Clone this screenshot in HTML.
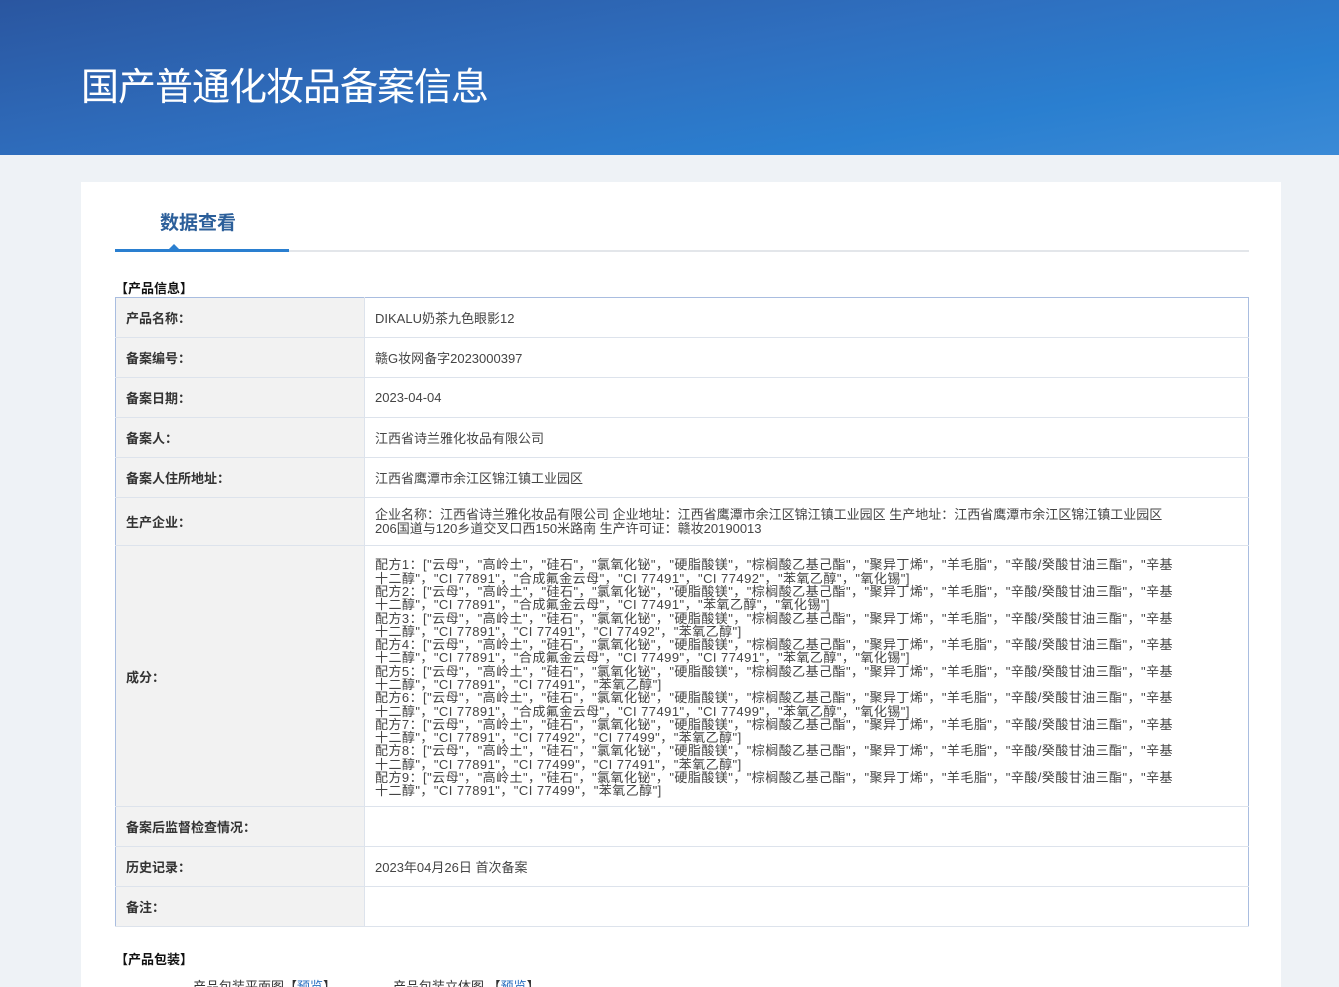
<!DOCTYPE html>
<html><head><meta charset="utf-8"><style>
*{margin:0;padding:0;box-sizing:border-box}
html,body{width:1339px;height:987px;overflow:hidden}
body{background:#eef2f6;font-family:"Liberation Sans","Noto Sans CJK SC",sans-serif;color:#333;position:relative}
.hd{height:155px;background:linear-gradient(170deg,#2a56a0 0%,#2f6fbf 45%,#2a7fd0 75%,#3a8ad6 100%);position:relative;overflow:hidden}
.hd h1{position:absolute;left:81px;top:56px;font-size:38px;font-weight:normal;color:#fff;letter-spacing:-1px}
.card{position:absolute;left:81px;top:182px;width:1200px;height:805px;background:#fff}
.tab{position:absolute;left:34px;top:28px;width:1134px;height:42px;border-bottom:2px solid #e3e6ea}
.tab span{position:absolute;left:45px;top:-2px;font-size:19px;font-weight:bold;color:#2c5f9a}
.tab i{position:absolute;left:0;bottom:-2px;width:174px;height:3px;background:#2a7fd0}
.tab b{position:absolute;left:54px;bottom:1px;border:5px solid transparent;border-bottom-color:#2a7fd0;border-top:0}
.sec{position:absolute;left:34px;font-size:13px;font-weight:bold;color:#111}
table{position:absolute;left:34px;top:115px;width:1134px;border-collapse:collapse;border:1px solid #a9bde0;font-size:13px}
td{border-bottom:1px solid #dde3ec;height:40px;vertical-align:middle;padding-left:10px}
td.l{width:249px;background:#f2f2f2;font-weight:bold;color:#333;border-right:1px solid #dde3ec}
td.v{color:#444}
.ing{font-size:13px;letter-spacing:0.45px;line-height:13.3px;white-space:nowrap;color:#444;padding-top:4px}
.pk{position:absolute;top:976px;font-size:13px;color:#333}
.pk a{color:#2a6fc0}
</style></head><body>
<div class="hd"><h1>国产普通化妆品备案信息</h1></div>
<div class="card">
<div class="tab"><span>数据查看</span><i></i><b></b></div>
<div class="sec" style="top:96px">【产品信息】</div>
<table>
<tr><td class="l">产品名称：</td><td class="v">DIKALU奶茶九色眼影12</td></tr>
<tr><td class="l">备案编号：</td><td class="v">赣G妆网备字2023000397</td></tr>
<tr><td class="l">备案日期：</td><td class="v">2023-04-04</td></tr>
<tr><td class="l">备案人：</td><td class="v">江西省诗兰雅化妆品有限公司</td></tr>
<tr><td class="l">备案人住所地址：</td><td class="v">江西省鹰潭市余江区锦江镇工业园区</td></tr>
<tr><td class="l" style="height:48px">生产企业：</td><td class="v" style="line-height:14px">企业名称：江西省诗兰雅化妆品有限公司 企业地址：江西省鹰潭市余江区锦江镇工业园区 生产地址：江西省鹰潭市余江区锦江镇工业园区<br>206国道与120乡道交叉口西150米路南 生产许可证：赣妆20190013</td></tr>
<tr><td class="l" style="height:261px">成分：</td><td class="ing">配方1：["云母"，"高岭土"，"硅石"，"氯氧化铋"，"硬脂酸镁"，"棕榈酸乙基己酯"，"聚异丁烯"，"羊毛脂"，"辛酸/癸酸甘油三酯"，"辛基<br>十二醇"，"CI 77891"，"合成氟金云母"，"CI 77491"，"CI 77492"，"苯氧乙醇"，"氧化锡"]<br>配方2：["云母"，"高岭土"，"硅石"，"氯氧化铋"，"硬脂酸镁"，"棕榈酸乙基己酯"，"聚异丁烯"，"羊毛脂"，"辛酸/癸酸甘油三酯"，"辛基<br>十二醇"，"CI 77891"，"合成氟金云母"，"CI 77491"，"苯氧乙醇"，"氧化锡"]<br>配方3：["云母"，"高岭土"，"硅石"，"氯氧化铋"，"硬脂酸镁"，"棕榈酸乙基己酯"，"聚异丁烯"，"羊毛脂"，"辛酸/癸酸甘油三酯"，"辛基<br>十二醇"，"CI 77891"，"CI 77491"，"CI 77492"，"苯氧乙醇"]<br>配方4：["云母"，"高岭土"，"硅石"，"氯氧化铋"，"硬脂酸镁"，"棕榈酸乙基己酯"，"聚异丁烯"，"羊毛脂"，"辛酸/癸酸甘油三酯"，"辛基<br>十二醇"，"CI 77891"，"合成氟金云母"，"CI 77499"，"CI 77491"，"苯氧乙醇"，"氧化锡"]<br>配方5：["云母"，"高岭土"，"硅石"，"氯氧化铋"，"硬脂酸镁"，"棕榈酸乙基己酯"，"聚异丁烯"，"羊毛脂"，"辛酸/癸酸甘油三酯"，"辛基<br>十二醇"，"CI 77891"，"CI 77491"，"苯氧乙醇"]<br>配方6：["云母"，"高岭土"，"硅石"，"氯氧化铋"，"硬脂酸镁"，"棕榈酸乙基己酯"，"聚异丁烯"，"羊毛脂"，"辛酸/癸酸甘油三酯"，"辛基<br>十二醇"，"CI 77891"，"合成氟金云母"，"CI 77491"，"CI 77499"，"苯氧乙醇"，"氧化锡"]<br>配方7：["云母"，"高岭土"，"硅石"，"氯氧化铋"，"硬脂酸镁"，"棕榈酸乙基己酯"，"聚异丁烯"，"羊毛脂"，"辛酸/癸酸甘油三酯"，"辛基<br>十二醇"，"CI 77891"，"CI 77492"，"CI 77499"，"苯氧乙醇"]<br>配方8：["云母"，"高岭土"，"硅石"，"氯氧化铋"，"硬脂酸镁"，"棕榈酸乙基己酯"，"聚异丁烯"，"羊毛脂"，"辛酸/癸酸甘油三酯"，"辛基<br>十二醇"，"CI 77891"，"CI 77499"，"CI 77491"，"苯氧乙醇"]<br>配方9：["云母"，"高岭土"，"硅石"，"氯氧化铋"，"硬脂酸镁"，"棕榈酸乙基己酯"，"聚异丁烯"，"羊毛脂"，"辛酸/癸酸甘油三酯"，"辛基<br>十二醇"，"CI 77891"，"CI 77499"，"苯氧乙醇"]</td></tr>
<tr><td class="l">备案后监督检查情况：</td><td class="v"></td></tr>
<tr><td class="l">历史记录：</td><td class="v">2023年04月26日 首次备案</td></tr>
<tr><td class="l">备注：</td><td class="v"></td></tr>
</table>
<div class="sec" style="top:767px">【产品包装】</div>
</div>
<div class="pk" style="left:193px">产品包装平面图【<a>预览</a>】</div>
<div class="pk" style="left:393px">产品包装立体图 【<a>预览</a>】</div>
</body></html>
